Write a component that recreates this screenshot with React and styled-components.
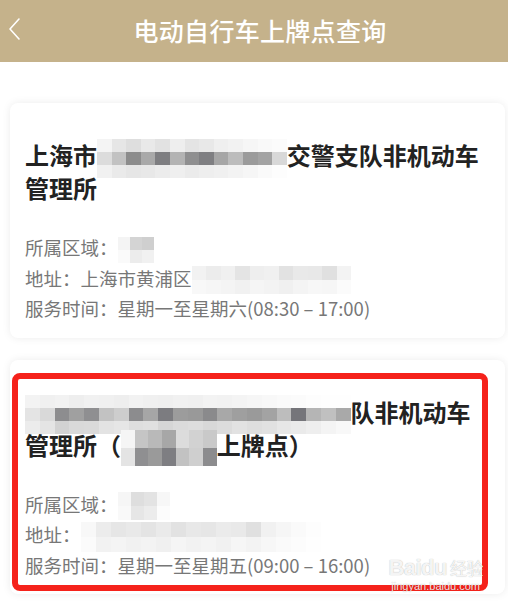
import styled, { createGlobalStyle } from "styled-components";

const GlobalStyle = createGlobalStyle`
  html, body {
    margin: 0;
    padding: 0;
    background: #fff;
  }
  body {
    font-family: "Noto Sans CJK SC", "Noto Sans", sans-serif;
  }
`;

const Page = styled.div`
  width: 508px;
  height: 610px;
  overflow: hidden;
  background: #fff;
`;

const Header = styled.header`
  height: 62px;
  background: #c5b28b;
  display: grid;
  grid-template-columns: 28px 1fr 16px;
  align-items: center;
`;

const Back = styled.div`
  display: flex;
  padding: 0 0 4px 8px;
`;

const Title = styled.h1`
  margin: 0 0 2px;
  color: #fff;
  font-size: 25px;
  font-weight: 500;
  letter-spacing: 0.3px;
  text-align: center;
`;

const List = styled.main`
  display: flex;
  flex-direction: column;
  gap: 22px;
  padding: 41px 3px 0 10px;
`;

const Card = styled.section`
  position: relative;
  background: #fff;
  border-radius: 8px;
  box-shadow: 0 0 8px rgba(0, 0, 0, 0.08);
  padding: 35px 14px 14px 15px;
`;

const CardTitle = styled.h2`
  margin: 0 0 28px;
  font-size: 24px;
  line-height: 33px;
  font-weight: 700;
  color: #222;
`;

const Info = styled.p`
  margin: 0;
  font-size: 18.5px;
  line-height: 30.5px;
  color: #777;
  white-space: nowrap;
`;

const MosaicBox = styled.span`
  display: inline-grid;
  grid-template-columns: repeat(${(p) => p.$cols}, ${(p) => p.$cell}px);
  grid-auto-rows: ${(p) => p.$rowH}px;
  vertical-align: middle;
  margin: -30px 0;
  filter: blur(0.6px);
`;

const Cell = styled.span`
  background: ${(p) => p.$c};
`;

const Highlight = styled.div`
  position: absolute;
  left: 2px;
  top: 13px;
  width: 476px;
  height: 218px;
  box-sizing: border-box;
  border: 6px solid #f5221b;
  border-radius: 8px;
  pointer-events: none;
`;

const Watermark = styled.div`
  position: absolute;
  right: 22px;
  bottom: 2px;
  color: rgba(255, 255, 255, 0.9);
  text-shadow: 0 0 1px rgba(0, 0, 0, 0.35);
  font-family: "Liberation Sans", sans-serif;
  text-align: center;
  line-height: 1;
  pointer-events: none;
`;

const WmLogo = styled.div`
  font-size: 22px;
  font-weight: 700;
  letter-spacing: -0.5px;
  span {
    font-family: "Noto Sans CJK SC", sans-serif;
    font-size: 17px;
    font-weight: 400;
    margin-left: 3px;
  }
`;

const WmUrl = styled.div`
  font-size: 11px;
  margin-top: 2px;
`;

const Mosaic = ({ rows, cell = 15, rowH = 15 }) => (
  <MosaicBox $cols={rows[0].length} $cell={cell} $rowH={rowH}>
    {rows.flat().map((c, i) => (
      <Cell key={i} $c={c} />
    ))}
  </MosaicBox>
);

const t1 = [
  ["#f4f4f4", "#e6e6e6", "#dedede", "#e9e9e9", "#e2e2e2", "#eeeeee", "#e4e4e4", "#e8e8e8", "#efefef", "#f2f2f2", "#f6f6f6", "#f9f9f9", "#fbfbfb"],
  ["#dcdcdc", "#c2c2c2", "#8c8c8c", "#a9a9a9", "#7e7e81", "#b3b3b3", "#8f8f90", "#7f7f82", "#a6a6a6", "#bcbcbc", "#9b9b9b", "#a3a3a3", "#d8d8d8"],
  ["#f1f1f1", "#eaeaea", "#e6e6e6", "#e8e8e8", "#ececec", "#efefef", "#ebebeb", "#eeeeee", "#f0f0f0", "#f3f3f3", "#f6f6f6", "#fafafa", "#fdfdfd"],
];

const t2 = [
  ["#f3f3f3", "#f0f0f0", "#f2f2f2", "#eeeeee", "#f1f1f1", "#f0f0f0", "#eeeeee", "#f2f2f2", "#f0f0f0", "#efefef", "#f1f1f1", "#f0f0f0", "#f3f3f3", "#f2f2f2", "#f4f4f4", "#f6f6f6", "#f8f8f8", "#fafafa", "#fbfbfb", "#fdfdfd", "#fefefe", "#fefefe"],
  ["#e4e4e4", "#d9d9d9", "#8d8d8f", "#a0a0a0", "#8f8f91", "#c2c2c2", "#cdcdcd", "#8c8c8e", "#a6a6a6", "#7c7c80", "#9c9c9c", "#999999", "#8a8a8c", "#a8a8a8", "#9f9f9f", "#9a9a9a", "#a3a3a3", "#bdbdbd", "#75757a", "#b5b5b5", "#c0c0c0", "#a9a9a9"],
  ["#ececec", "#e4e4e4", "#d2d2d2", "#d9d9d9", "#dadada", "#e3e3e3", "#e6e6e6", "#dedede", "#e0e0e0", "#d6d6d6", "#dbdbdb", "#dddddd", "#d8d8d8", "#dcdcdc", "#e2e2e2", "#dedede", "#e1e1e1", "#e7e7e7", "#eaeaea", "#eeeeee", "#f4f4f4", "#f8f8f8"],
];

const t2b = [
  ["#f5f5f5", "#c5c5c5", "#b9b9b9", "#a7a7a7", "#dcdcdc", "#d2d2d2", "#c9c9c9"],
  ["#e4e4e4", "#8f8f91", "#9a9a9a", "#7e7e82", "#c2c2c2", "#cfcfcf", "#8c8c8e"],
];

const area1 = [
  ["#f4f4f4", "#d4d4d4", "#cfcfcf"],
  ["#fafafa", "#ececec", "#f1f1f1"],
];

const addr1 = [
  ["#f2f2f2", "#ececec", "#f0f0f0", "#e4e4e4", "#eeeeee", "#f0f0f0", "#e2e2e2", "#e9e9e9", "#e8e8e8", "#e0e0e0", "#f3f3f3"],
  ["#f8f8f8", "#f6f6f6", "#f4f4f4", "#f1f1f1", "#f5f5f5", "#f3f3f3", "#f0f0f0", "#f4f4f4", "#f7f7f7", "#f6f6f6", "#fbfbfb"],
];

const area2 = [
  ["#f6f6f6", "#dedede", "#e3e3e3", "#f7f7f7"],
  ["#f9f9f9", "#e6e6e6", "#ececec", "#fcfcfc"],
];

const addr2 = [
  ["#f8f8f8", "#ececec", "#e6e6e6", "#e9e9e9", "#e4e4e4", "#eaeaea", "#e2e2e2", "#e8e8e8", "#e6e6e6", "#ebebeb", "#e9e9e9", "#e0e0e0", "#f1f1f1", "#f6f6f6", "#fafafa", "#fdfdfd"],
  ["#fbfbfb", "#f2f2f2", "#f4f4f4", "#f1f1f1", "#f3f3f3", "#f0f0f0", "#f5f5f5", "#f2f2f2", "#f4f4f4", "#f1f1f1", "#f6f6f6", "#f3f3f3", "#f7f7f7", "#fafafa", "#fcfcfc", "#fefefe"],
];

const App = () => {
  return (
    <Page>
      <GlobalStyle />
      <Header>
        <Back>
          <svg width="14" height="24" viewBox="0 0 14 24">
            <polyline
              points="11,2 2,12 11,22"
              fill="none"
              stroke="#fff"
              strokeWidth="1.6"
              strokeLinecap="round"
              strokeLinejoin="round"
            />
          </svg>
        </Back>
        <Title>电动自行车上牌点查询</Title>
      </Header>

      <List>
        <Card>
          <CardTitle>
            上海市<Mosaic rows={t1} cell={14.6} rowH={13} />交警支队非机动车
            <br />
            管理所
          </CardTitle>
          <Info>
            所属区域：<Mosaic rows={area1} cell={12} rowH={13} />
          </Info>
          <Info>
            地址：上海市黄浦区<Mosaic rows={addr1} cell={14.5} rowH={14} />
          </Info>
          <Info>服务时间：星期一至星期六(08:30 – 17:00)</Info>
        </Card>

        <Card>
          <CardTitle>
            <Mosaic rows={t2} cell={14.8} rowH={13} />队非机动车
            <br />
            管理所（<Mosaic rows={t2b} cell={13.7} rowH={18} />上牌点）
          </CardTitle>
          <Info>
            所属区域：<Mosaic rows={area2} cell={13} rowH={14} />
          </Info>
          <Info>
            地址：<Mosaic rows={addr2} cell={15} rowH={15} />
          </Info>
          <Info>服务时间：星期一至星期五(09:00 – 16:00)</Info>
          <Highlight />
          <Watermark>
            <WmLogo>
              Baidu<span>经验</span>
            </WmLogo>
            <WmUrl>jingyan.baidu.com</WmUrl>
          </Watermark>
        </Card>
      </List>
    </Page>
  );
};

export default App;
